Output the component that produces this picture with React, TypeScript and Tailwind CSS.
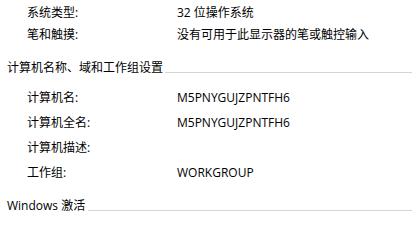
import React from "react";

const font = { fontFamily: '"Open Sans", "Noto Sans CJK SC", sans-serif' };

function Row({ label, value, h }: { label: string; value?: string; h: string }) {
  return (
    <div className={`flex items-center pl-[27px] ${h}`}>
      <div className="w-[150px] shrink-0">{label}</div>
      <div className="whitespace-pre">{value}</div>
    </div>
  );
}

function Header({ title, gap }: { title: string; gap: string }) {
  return (
    <div className="flex h-[22px] items-center pl-[7px]">
      <span className="whitespace-nowrap leading-[12px]">{title}</span>
      <div className={`mt-[8px] h-px flex-1 bg-[#d5d5d5] ${gap}`} />
    </div>
  );
}

export default function App() {
  return (
    <div
      className="h-[212px] w-[412px] overflow-hidden bg-white pt-[2px] text-[12px] leading-[16px] text-black"
      style={font}
    >
      <Row label="系统类型:" value="32 位操作系统" h="h-[22px]" />
      <Row label="笔和触摸:" value="没有可用于此显示器的笔或触控输入" h="h-[22px]" />
      <div className="mt-[11px]">
        <Header title="计算机名称、域和工作组设置" gap="ml-[2px]" />
      </div>
      <div className="mt-[6px]">
        <Row label="计算机名:" value="M5PNYGUJZPNTFH6" h="h-[25px]" />
        <Row label="计算机全名:" value="M5PNYGUJZPNTFH6" h="h-[25px]" />
        <Row label="计算机描述:" h="h-[25px]" />
        <Row label="工作组:" value="WORKGROUP" h="h-[25px]" />
      </div>
      <div className="mt-[10px]">
        <Header title="Windows 激活" gap="ml-[3px]" />
      </div>
    </div>
  );
}
